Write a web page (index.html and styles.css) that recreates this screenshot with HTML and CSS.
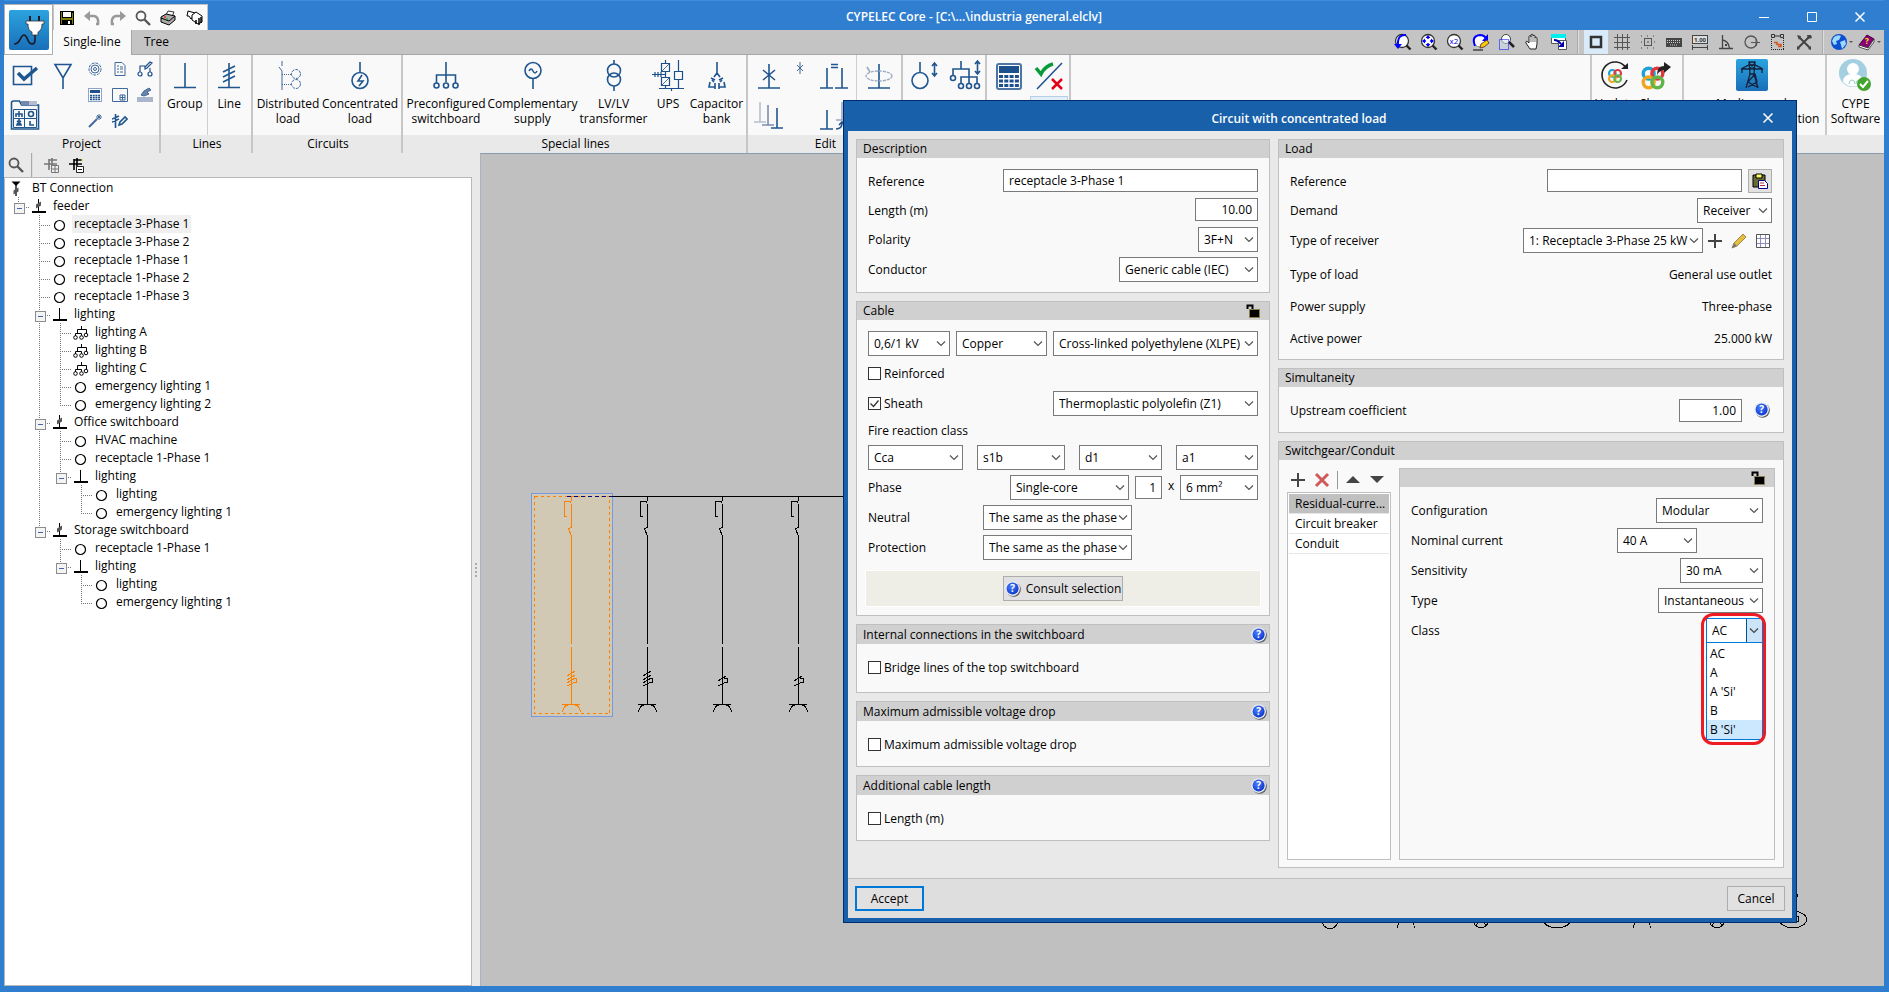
FILE: index.html
```html
<!DOCTYPE html>
<html lang="en">
<head>
<meta charset="utf-8">
<title>CYPELEC Core</title>
<link rel="stylesheet" href="styles.css">
</head>
<body>
<svg class="sprite" width="0" height="0" aria-hidden="true">
  <defs>
    <linearGradient id="sky" x1="0" y1="0" x2="0" y2="1"><stop offset="0" stop-color="#2ba3df"/><stop offset="1" stop-color="#1a6fb8"/></linearGradient>
    <radialGradient id="ball" cx=".4" cy=".35" r=".7"><stop offset="0" stop-color="#4a7dff"/><stop offset="1" stop-color="#0a35c8"/></radialGradient>
    <symbol id="help" viewBox="0 0 16 16"><circle cx="8.500" cy="8.500" r="7.300" fill="#55585f"/><circle cx="7.600" cy="7.600" r="7.400" fill="#e8ebf5"/><circle cx="7.600" cy="7.600" r="6" fill="url(#ball)"/><text x="7.600" y="11.400" text-anchor="middle" font-size="10" font-weight="700" fill="#fff">?</text></symbol>
    <symbol id="lock" viewBox="0 0 16 16"><path d="M2.500 6V2.500h5V6" fill="none" stroke="#000" stroke-width="2"/><rect x="4.500" y="6.500" width="10" height="8" fill="#000" stroke="#8a7f4a"/></symbol>
    <symbol id="plus" viewBox="0 0 16 16"><path d="M8 1v14M1 8h14" stroke="#444" stroke-width="2"/></symbol>
    <symbol id="glass" viewBox="0 0 16 16"><circle cx="6" cy="6" r="4.500" fill="none" stroke="#555" stroke-width="1.800"/><path d="M9.500 9.500l5.500 5.500" stroke="#555" stroke-width="2.400"/></symbol>
    <symbol id="lens" viewBox="0 0 18 18"><circle cx="8" cy="8" r="6.500" fill="#fff" stroke="#333" stroke-width="1.300"/><path d="M12.500 12.500l4 4" stroke="#222" stroke-width="2.400"/></symbol>
    <symbol id="t-circle" viewBox="0 0 20 18"><circle cx="9.500" cy="10.500" r="5" fill="#fff" stroke="#000" stroke-width="1.200"/></symbol>
    <symbol id="t-group" viewBox="0 0 20 18"><path d="M9.500 3v12" stroke="#000"/><path d="M3 15h14" stroke="#000" stroke-width="2"/></symbol>
    <symbol id="t-board" viewBox="0 0 20 18"><path d="M9.500 2v13" stroke="#000"/><path d="M3 15h14" stroke="#000" stroke-width="2"/><path d="M7 7.500l5-3v4l-5 3z" fill="#555"/></symbol>
    <symbol id="t-feed" viewBox="0 0 20 18"><path d="M5.500 2.500h9L10 7z"/><path d="M10 6v11" stroke="#000" stroke-width="1.300"/><path d="M7.500 11.500l5-3v4l-5 3z" fill="#555"/></symbol>
    <symbol id="t-dist" viewBox="0 0 20 18"><path d="M10.500 3v3M6.500 11V6.500h9V11M4.500 13v-2.500h6v2" fill="none" stroke="#000"/><g fill="#fff" stroke="#000"><circle cx="4.500" cy="14.500" r="1.800"/><circle cx="10.500" cy="14.500" r="1.800"/><circle cx="15" cy="12" r="1.800"/></g></symbol>
    <symbol id="rings" viewBox="0 0 24 24"><g fill="none" stroke-width="3.200"><circle cx="8" cy="8" r="5" stroke="#1ba3d8"/><circle cx="16" cy="8" r="5" stroke="#e0383e"/><circle cx="8" cy="16" r="5" stroke="#f2a51e"/><circle cx="16" cy="16" r="5" stroke="#62b549"/></g></symbol>
  </defs>
</svg>

<div class="window">
<header class="top">
  <button class="app" aria-label="Application menu"><svg width="40" height="40" viewBox="0 0 40 40"><rect width="40" height="40" rx="2" fill="url(#sky)"/><path d="M5 34c7 0 6-9 10-9s3 9 8 9c4 0 3-6 3-9" fill="none" stroke="#1b1b2b" stroke-width="1.600"/><path d="M21 6v5M30 6v5" stroke="#1b1b2b" stroke-width="2"/><path d="M17 11h18v3h-2c0 5-2 7-4 8v3h-6v-3c-3-1-4-4-4-8h-2z" fill="#fff" stroke="#333" stroke-width=".8"/></svg></button>
  <div class="top-main">
    <div class="titlebar">
      <div class="quick">
        <button aria-label="Save"><svg width="16" height="16"><path d="M1 1h14v14H1z" fill="#000"/><path d="M2 2h1v12H2zM13 3h1v11h-1z" fill="#808000"/><path d="M4 2h8v5H4z" fill="#fff"/><path d="M2 8h12v2H2z" fill="#808000"/><path d="M9 11h2v3H9z" fill="#fff"/></svg></button>
        <button aria-label="Undo"><svg width="16" height="16"><path d="M4 6h6q5 1 4 8h-2" fill="none" stroke="#999" stroke-width="2.500"/><path d="M6 1v10L0 6z" fill="#999"/></svg></button>
        <button aria-label="Redo"><svg width="16" height="16"><path d="M12 6H6Q1 7 2 14h2" fill="none" stroke="#999" stroke-width="2.500"/><path d="M10 1v10l6-5z" fill="#999"/></svg></button>
        <button aria-label="Search"><svg width="16" height="16"><use href="#glass"/></svg></button>
        <button aria-label="Print"><svg width="17" height="16"><path d="M6 5l2-4 6 1-2 5z" fill="#fff" stroke="#333"/><path d="M1 7l5-3 9 2v4l-6 5-8-3z" fill="#aaa" stroke="#000"/><path d="M1 8l8 3 6-5" fill="none" stroke="#000"/><path d="M4 7h2" stroke="#f00"/><path d="M6 9h2" stroke="#0a0"/></svg></button>
        <button aria-label="Configure print"><svg width="17" height="16"><path d="M2 1l7 2-1 2-3 4-2-3H1z" fill="#fff" stroke="#000"/><path d="M6 5l4-3 6 4v6l-4 2-6-4z" fill="#fff" stroke="#000"/><path d="M13 8v7M10 10v4M15 7v6" stroke="#000" stroke-width="1.500"/></svg></button>
      </div>
      <h1 class="title">CYPELEC Core - [C:\...\industria general.elclv]</h1>
      <div class="controls">
        <button aria-label="Minimize"><svg width="12" height="12"><path d="M1 6.500h10" stroke="#fff"/></svg></button>
        <button aria-label="Maximize"><svg width="12" height="12"><path d="M1.500 1.500h9v9h-9z" fill="none" stroke="#fff"/></svg></button>
        <button aria-label="Close"><svg width="12" height="12"><path d="M1.500 1.500l9 9m0-9l-9 9" stroke="#fff" stroke-width="1.500"/></svg></button>
      </div>
    </div>
    <div class="tabbar">
      <nav class="tabs"><a class="tab active" href="#single">Single-line</a><a class="tab" href="#tree">Tree</a></nav>
      <div class="tools">
        <button aria-label="Redraw"><svg width="18" height="18"><use href="#lens"/><path d="M12 2Q3 1 4 13" fill="none" stroke="#00f" stroke-width="2"/><path d="M0 11h8l-4 5z" fill="#00f"/></svg></button>
        <button aria-label="Zoom extents"><svg width="18" height="18"><use href="#lens"/><path d="M8 3v3M8 10v3M3 8h3M10 8h3" stroke="#00f" stroke-width="1.500"/><path d="M8 2l2.500 3h-5zM8 14l2.500-3h-5zM2 8l3-2.500v5zM14 8l-3-2.500v5z" fill="#00f"/></svg></button>
        <button aria-label="Zoom by two"><svg width="18" height="18"><use href="#lens"/><text x="8" y="11" text-anchor="middle" font-size="8" fill="#00f">x2</text></svg></button>
        <button aria-label="Previous zoom"><svg width="18" height="18"><circle cx="8" cy="8" r="6" fill="#fff" stroke="#888"/><path d="M3 13Q-1 3 8 2q4 0 7 4" fill="none" stroke="#00f" stroke-width="2"/><path d="M16 1v7H10z" fill="#00f"/><path d="M8 15l1-4 6-4 2 3-5 4z" fill="#fc0" stroke="#643"/><path d="M1 17h10" stroke="#000"/></svg></button>
        <button aria-label="Window zoom"><svg width="18" height="18"><circle cx="8" cy="6" r="4.500" fill="#fff" stroke="#444"/><path d="M11 9l5 5" stroke="#222" stroke-width="2.500"/><path d="M1.500 6.500h9v10h-9z" fill="#cde" fill-opacity=".5" stroke="#00f" stroke-dasharray="1 1"/></svg></button>
        <button aria-label="Pan"><svg width="18" height="18"><path d="M6 16L2 10c-1-2 1-2 2-1l1 1V4c0-2 2-2 2 0V2c0-1 2-1 2 0v1c0-1 2-1 2 0v2c0-1 2-1 2 0v6l-1 5z" fill="#fff" stroke="#222"/><path d="M7 4v5M9 3v6M11 5v4" stroke="#777"/></svg></button>
        <button aria-label="Next window"><svg width="18" height="18"><path d="M1.500 1.500h14v9h-14z" fill="#fff" stroke="#555"/><path d="M1 1h15v4H1z" fill="#0ee"/><path d="M8.500 7.500h8v9h-8z" fill="#fff" stroke="#555"/><path d="M4 7q4 0 7 4" fill="none" stroke="#00a" stroke-width="2"/><path d="M8 14l6-6v6z" fill="#00a"/></svg></button>
        <span class="bar-sep"></span>
        <button class="on" aria-label="Frame"><svg width="18" height="18"><rect x="4" y="4" width="10" height="10" fill="none" stroke="#333" stroke-width="2.500"/></svg></button>
        <button aria-label="Grid"><svg width="18" height="18"><path d="M4.500 1v16M9.500 1v16M14.500 1v16M1 4.500h16M1 9.500h16M1 14.500h16" stroke="#555"/></svg></button>
        <button aria-label="Snap"><svg width="18" height="18"><rect x="5.500" y="5.500" width="7" height="7" fill="none" stroke="#555"/><path d="M8 9h2M2 3h1M8 3h1M14 3h1M2 9h1M15 9h1M2 15h1M8 15h1M14 15h1" stroke="#444"/></svg></button>
        <button aria-label="Keyboard"><svg width="18" height="18"><rect x="1" y="5" width="16" height="9" fill="#444"/><path d="M2 7.500h14M2 9.500h14M5 12h8" stroke="#ccc" stroke-dasharray="1 1"/></svg></button>
        <button aria-label="Dimensions"><svg width="18" height="18"><rect x="1.500" y="2.500" width="15" height="8" fill="#ddd" stroke="#444"/><text x="9" y="9" text-anchor="middle" font-size="6" font-weight="700" fill="#333">1.00</text><path d="M1.500 12v5M16.500 12v5M2 14.500h14" stroke="#444"/></svg></button>
        <button aria-label="Orthogonal"><svg width="18" height="18"><path d="M2 15.500h14M5.500 2v13M5.500 7q6 1 7 8" fill="none" stroke="#444" stroke-width="1.300"/><path d="M8 12h2" stroke="#444" stroke-width="2"/></svg></button>
        <button aria-label="Polar"><svg width="18" height="18"><circle cx="8" cy="9" r="6" fill="none" stroke="#555" stroke-width="1.300"/><path d="M8 9.500h9M13 6v7" stroke="#555"/></svg></button>
        <button aria-label="Tracking"><svg width="18" height="18"><path d="M2.500 1.500h3v3h-3zM11.500 1.500h3v3h-3zM6 3h5" fill="none" stroke="#333"/><path d="M2.500 6v11M14.500 5v12M2 16.500h13" stroke="#222" stroke-dasharray="1 1"/><path d="M5 9.500h3v2h4v2H9" fill="none" stroke="#d4521e" stroke-width="1.500"/></svg></button>
        <button aria-label="Tools"><svg width="18" height="18"><path d="M3 15L14 4M4 4l11 11" stroke="#444" stroke-width="2"/><path d="M2 2l4 1-2 4zM16 2h-4l1 4 4-1zM2 13l3 3-3 1zM16 13l-3 3 3 1z" fill="#444"/></svg></button>
        <span class="bar-sep"></span>
        <button class="more" aria-label="Web"><svg width="18" height="18"><circle cx="9" cy="9" r="8" fill="#0a50d0"/><path d="M4 4q4-3 7-1l-2 4-3 1 1 3-3 1-2-4zM10 9l5-2 1 4-4 5-1-4z" fill="#9fd8ff"/></svg></button>
        <button class="more" aria-label="Manual"><svg width="18" height="18"><path d="M1 12l8-10 7 4-6 10z" fill="#8a0078" stroke="#400038"/><path d="M1 12l9 3 6-9v3l-6 8-9-3z" fill="#fff" stroke="#333" stroke-width=".8"/><text x="9" y="11" font-size="8" fill="#fe0" text-anchor="middle" font-weight="700">?</text></svg></button>
      </div>
    </div>
  </div>
</header>

<section class="ribbon">
  <div class="group g-project">
    <div class="project">
      <div class="stack">
        <button aria-label="General data"><svg class="ink" width="30" height="30"><path d="M3.500 6.500h18v18h-18z"/><path d="M8 13l6 6L27 8" stroke-width="3.500"/></svg></button>
        <button aria-label="Library"><svg class="ink" width="30" height="30"><path d="M1.500 29V3q0-2 2-2h6l2 4h17v24z"/><path d="M11 1h8v4h-8z" fill="#7689ac" stroke="none"/><path d="M19 1h8v4h-8z" fill="#b7bdd0" stroke="none"/><path d="M3.500 9.500h11v9h-11zM14.500 9.500h12v9h-12zM3.500 18.500h11v9h-11zM14.500 18.500h12v9h-12z" stroke-width="1"/><circle cx="21" cy="14" r="2.500"/><path d="M9 11v3M6 17v-3h6v3M9 14v3M9 19v6M6 25h6M7 21l4 3m0-3l-4 3M20 21v4h4"/></svg></button>
      </div>
      <button class="mid" aria-label="Supply"><svg class="ink" width="20" height="30"><path d="M2 3.500h16L10 17zM10 16v12"/></svg></button>
      <div class="nine">
        <button aria-label="Options"><svg class="ink thin" width="16" height="16"><circle cx="8" cy="8" r="6" stroke-dasharray="3 1"/><circle cx="8" cy="8" r="4"/><circle cx="8" cy="8" r="1.500"/></svg></button>
        <button aria-label="Report"><svg class="ink thin" width="16" height="16"><path d="M3 1.500h7l3 3v10H3zM5 5h2M8 6h3M5 8h2M8 8h3M5 11h2M8 11h3"/></svg></button>
        <button aria-label="Edit scheme"><svg class="ink thin strong" width="16" height="16"><path d="M3 11V5h5M13 11V7M8 6l5-5 2 1-5 5-2 1z"/><circle cx="3" cy="13" r="2"/><circle cx="13" cy="13" r="2"/></svg></button>
        <button aria-label="Calculator"><svg width="16" height="16"><rect x="1.500" y="1.500" width="13" height="13" fill="#fff" stroke="#8da5c4"/><path d="M3 3h10v3H3z" fill="#1c4f8c"/><path d="M3 8.500h10M3 10.500h10M3 12.500h10" stroke="#1c4f8c" stroke-width="1.500" stroke-dasharray="2 .7"/></svg></button>
        <button aria-label="Sheet"><svg class="ink thin" width="16" height="16"><path d="M.5 1.500h15v13H.5zM8 8h5v5H8zM10.500 8v5M8 10.500h5"/></svg></button>
        <button aria-label="Materials"><svg class="ink thin" width="16" height="16"><path d="M0 10h16v5H0z" fill="#a9b6cb" stroke="none"/><path d="M4 8l3-4 5-3 2 2-4 2 2 2-5 2z" fill="#6a83a8"/></svg></button>
        <button aria-label="Wizard"><svg class="ink thin" width="16" height="16"><path d="M2 14l8-8" stroke-width="2"/><path d="M12 1v6M9 4h6M10 2l4 4m0-4l-4 4"/></svg></button>
        <button aria-label="Edit line"><svg class="ink" width="16" height="16"><path d="M3.500 1v14M0 6l7-3M0 9l7-3M7 12l1-3 5-5 2 2-5 5z"/></svg></button>
      </div>
    </div>
    <div class="caption">Project</div>
  </div>
  <div class="group g-lines">
    <div class="buttons">
      <button class="big"><svg class="ink" width="30" height="34"><path d="M15 5v24M4 29.500h22"/></svg>Group</button>
      <span class="sub-sep"></span>
      <button class="big"><svg class="ink" width="30" height="34"><path d="M15 5v24M4 29.500h22M9 14l12-6M9 19l12-6M9 24l12-6"/></svg>Line</button>
    </div>
    <div class="caption">Lines</div>
  </div>
  <div class="group g-circuits">
    <div class="buttons">
      <button class="big w-dist"><svg class="ink thin" width="30" height="34"><path d="M9 3v5M6 9l3 4v19"/><path d="M9 16.500h9M9 26.500h9" stroke-dasharray="1 1"/><circle cx="23" cy="16" r="4.500" stroke-dasharray="3 1"/><circle cx="23" cy="26" r="4.500" stroke-dasharray="3 1"/></svg>Distributed<br>load</button>
      <button class="big w-conc"><svg class="ink" width="30" height="34"><path d="M15 4v10"/><circle cx="15" cy="22.500" r="8"/><path d="M17 17l-4 6h5l-4 5"/></svg>Concentrated<br>load</button>
    </div>
    <div class="caption">Circuits</div>
  </div>
  <div class="group g-special">
    <div class="buttons">
      <button class="big w-pre"><svg class="ink" width="30" height="34"><path d="M15 4v20M5.500 25v-8h19v8"/><circle cx="5.500" cy="27.500" r="2.500"/><circle cx="15" cy="27.500" r="2.500"/><circle cx="24.500" cy="27.500" r="2.500"/></svg>Preconfigured<br>switchboard</button>
      <button class="big w-comp"><svg class="ink" width="30" height="34"><circle cx="15" cy="12.500" r="8"/><path d="M15 21v10M11 13q2-4 4 0t4 0"/></svg>Complementary<br>supply</button>
      <button class="big w-lv"><svg class="ink" width="30" height="34"><path d="M15 2v4M15 28v5"/><circle cx="15" cy="12.500" r="6.500"/><circle cx="15" cy="21.500" r="6.500"/></svg>LV/LV<br>transformer</button>
      <button class="big w-ups"><svg class="ink thin strong" width="34" height="34"><path d="M14.500 2v3M14.500 13v6M14.500 27v3M27.500 2v11M27.500 22v8M8 30.500h25M20.500 30v3M1 16.500h13M4 14v5M7 14v5M10 14v5M10.500 5.500h8v8h-8zM10.500 19.500h8v8h-8zM23.500 13.500h8v8h-8z"/><path d="M11 13l7-7M11 27l7-7" stroke-width=".8"/></svg>UPS</button>
      <button class="big w-cap"><svg class="ink" width="30" height="34"><path d="M15 4v11M15 15l-3 4M15 15l3 4M9 20l4 2M21 20l-4 2M8 24l-1 5h6M22 24l1 5h-6M13 25v6M17 25v6M10 22l2 2M20 22l-2 2"/></svg>Capacitor<br>bank</button>
    </div>
    <div class="caption">Special lines</div>
  </div>
  <div class="group g-edit">
    <div class="buttons">
      <div class="edit-icons">
        <button aria-label="Delete line"><svg class="ink" width="30" height="34"><path d="M15 6v24M4 30h22M9 12l12 10M21 12L9 22"/></svg></button>
        <button aria-label="Delete point"><svg class="ink thin" width="16" height="34"><path d="M8 4v12M5 7l6 6M11 7l-6 6"/></svg></button>
        <button aria-label="Match"><svg class="ink" width="30" height="34"><path d="M8 10v20M1 30h13M23 10v20M16 30h13M12 6.500h7M12 9.500h7"/></svg></button>
        <button aria-label="Move"><svg class="ink" width="32" height="34"><path d="M7 4v20M1 24h12" stroke="#b8bfd2"/><path d="M15 7v20M9 27h12" stroke="#7c8db0"/><path d="M24 10v20M18 30h12"/></svg></button>
        <span></span>
        <button aria-label="Copy"><svg class="ink" width="30" height="34"><path d="M8 12v19M1 31h13"/><path d="M23 4v18M17 22h12" stroke="#9aa6c0"/><path d="M17 31q6 0 6-6M20 27l3-3 3 3"/></svg></button>
      </div>
      <span class="sub-sep"></span>
      <button class="big w-loop" aria-label="Rotate"><svg class="ink" width="30" height="34"><path d="M15 6v24M4 30h22"/><ellipse cx="15" cy="18" rx="13" ry="5" stroke="#9aa9c2" stroke-width="1.300" stroke-dasharray="3 1"/><path d="M3 9l3 5" stroke="#9aa9c2"/></svg></button>
    </div>
    <div class="caption">Edit</div>
  </div>
  <div class="group g-pair">
    <div class="buttons">
      <button class="big w-pair" aria-label="Move load"><svg class="ink" width="30" height="34"><path d="M10 4v10"/><circle cx="10" cy="22.500" r="8"/><path d="M24.500 6v11M22 8l2.500-3L27 8M22 15l2.500 3 2.500-3"/></svg></button>
      <button class="big w-pair" aria-label="Move tree"><svg class="ink" width="32" height="34"><path d="M12 3v8M4 17v-6h16v6M12 26v-7h16v7M20 17v9M28.500 4v11M26 6l2.500-3L31 6M26 13l2.500 3 2.500-3"/><circle cx="4" cy="20" r="2.500"/><circle cx="12" cy="28" r="2.500"/><circle cx="20" cy="28" r="2.500"/><circle cx="28" cy="28" r="2.500"/></svg></button>
    </div>
  </div>
  <div class="group g-pair">
    <div class="buttons">
      <button class="big w-pair" aria-label="Calculate"><svg width="28" height="34"><rect x="2" y="6" width="24" height="25" rx="2" fill="#fff" stroke="#4c74a5" stroke-width="2"/><path d="M4 8h20v7H4z" fill="#1c4f8c"/><path d="M4 18.500h20M4 23h20M4 27.500h20" stroke="#1c4f8c" stroke-width="3" stroke-dasharray="4 1.300"/></svg></button>
      <button class="big w-pair check-btn" aria-label="Check"><svg width="30" height="34"><path d="M3 31L28 5" stroke="#1c4f8c" stroke-width="1.500"/><path d="M2 10l5 6Q11 8 19 6" fill="none" stroke="#0a9a3a" stroke-width="3.500"/><path d="M18 21l10 10m0-10L18 31" stroke="#e2001a" stroke-width="2.500"/></svg><span class="under"></span></button>
    </div>
  </div>
  <div class="ribbon-right">
    <div class="rgroup r-up">
      <button class="big w-half"><svg width="30" height="34"><path d="M26 10A13 13 0 1 0 27 22" fill="none" stroke="#222" stroke-width="1.600"/><path d="M21 11h7V5z" fill="#222"/><svg x="7" y="10" width="16" height="16"><use href="#rings"/></svg></svg>Update</button>
      <button class="big w-half"><svg width="34" height="34"><svg x="1" y="7" width="26" height="26"><use href="#rings"/></svg><path d="M18 17q0-9 7-9V4l7 5-7 6v-3q-4 0-7 5z" fill="#222"/></svg>Share</button>
    </div>
    <div class="rgroup r-mv">
      <button class="big"><svg width="32" height="34"><rect y="1" width="32" height="32" rx="2" fill="url(#sky)"/><path d="M10 30l4-14-1-12h6l-1 12 4 14M5 11l8-4h6l8 4M5 11h22M6 11v4M26 11v4M13 16h6l2 8-9 5M19 16l-7 8 9 5M13 5l6 6M19 5l-6 6" fill="none" stroke="#14213a" stroke-width="1.300"/></svg>Medium and<br>high voltage distribution</button>
    </div>
    <div class="rgroup r-cype">
      <button class="big"><svg width="32" height="34"><circle cx="14" cy="15" r="14" fill="#a3cfe0"/><circle cx="14" cy="11" r="6" fill="#fff"/><path d="M4 24q0-8 10-8t10 8q-10 9-20 0z" fill="#fff"/><path d="M10 26q0-4 3-4t3 4M17 26q0-4 3-4" fill="none" stroke="#9cc"/><circle cx="25" cy="26" r="7" fill="#43a52f"/><path d="M21 26l3 3 5-6" fill="none" stroke="#fff" stroke-width="2"/></svg>CYPE<br>Software</button>
    </div>
  </div>
</section>

<main class="work">
  <aside class="side">
    <div class="side-tools">
      <button aria-label="Find"><svg width="16" height="16"><use href="#glass"/></svg></button>
      <span class="bar-sep"></span>
      <button aria-label="Expand all"><svg width="16" height="16"><path d="M1 7h5M6 2v11M6 3h8M6 7h8M9 1v4M9 5v8" stroke="#777" stroke-width="1.600" fill="none"/><path d="M8.500 8.500h7v7h-7zM12 8v8M8 12h8" fill="#eee" stroke="#777"/></svg></button>
      <button aria-label="Collapse all"><svg width="16" height="16"><path d="M1 7h5M6 2v11M6 3h8M6 7h8M9 1v4M9 5v8" stroke="#000" stroke-width="1.600" fill="none"/><path d="M13 3h2" stroke="#dd0"/><path d="M8.500 9.500h7v6h-7zM10 12.500h4" fill="#fff" stroke="#222"/></svg></button>
    </div>
    <div class="tree">
      <div class="row root"><svg width="20" height="18"><use href="#t-feed"/></svg><span>BT Connection</span></div>
      <ul>
        <li><div class="row"><i class="exp"></i><svg width="20" height="18"><use href="#t-board"/></svg><span>feeder</span></div>
          <ul>
            <li><div class="row"><i></i><svg width="20" height="18"><use href="#t-circle"/></svg><span class="sel">receptacle 3-Phase 1</span></div></li>
            <li><div class="row"><i></i><svg width="20" height="18"><use href="#t-circle"/></svg><span>receptacle 3-Phase 2</span></div></li>
            <li><div class="row"><i></i><svg width="20" height="18"><use href="#t-circle"/></svg><span>receptacle 1-Phase 1</span></div></li>
            <li><div class="row"><i></i><svg width="20" height="18"><use href="#t-circle"/></svg><span>receptacle 1-Phase 2</span></div></li>
            <li><div class="row"><i></i><svg width="20" height="18"><use href="#t-circle"/></svg><span>receptacle 1-Phase 3</span></div></li>
            <li><div class="row"><i class="exp"></i><svg width="20" height="18"><use href="#t-group"/></svg><span>lighting</span></div>
              <ul>
                <li><div class="row"><i></i><svg width="20" height="18"><use href="#t-dist"/></svg><span>lighting A</span></div></li>
                <li><div class="row"><i></i><svg width="20" height="18"><use href="#t-dist"/></svg><span>lighting B</span></div></li>
                <li><div class="row"><i></i><svg width="20" height="18"><use href="#t-dist"/></svg><span>lighting C</span></div></li>
                <li><div class="row"><i></i><svg width="20" height="18"><use href="#t-circle"/></svg><span>emergency lighting 1</span></div></li>
                <li><div class="row"><i></i><svg width="20" height="18"><use href="#t-circle"/></svg><span>emergency lighting 2</span></div></li>
              </ul></li>
            <li><div class="row"><i class="exp"></i><svg width="20" height="18"><use href="#t-board"/></svg><span>Office switchboard</span></div>
              <ul>
                <li><div class="row"><i></i><svg width="20" height="18"><use href="#t-circle"/></svg><span>HVAC machine</span></div></li>
                <li><div class="row"><i></i><svg width="20" height="18"><use href="#t-circle"/></svg><span>receptacle 1-Phase 1</span></div></li>
                <li><div class="row"><i class="exp"></i><svg width="20" height="18"><use href="#t-group"/></svg><span>lighting</span></div>
                  <ul>
                    <li><div class="row"><i></i><svg width="20" height="18"><use href="#t-circle"/></svg><span>lighting</span></div></li>
                    <li><div class="row"><i></i><svg width="20" height="18"><use href="#t-circle"/></svg><span>emergency lighting 1</span></div></li>
                  </ul></li>
              </ul></li>
            <li><div class="row"><i class="exp"></i><svg width="20" height="18"><use href="#t-board"/></svg><span>Storage switchboard</span></div>
              <ul>
                <li><div class="row"><i></i><svg width="20" height="18"><use href="#t-circle"/></svg><span>receptacle 1-Phase 1</span></div></li>
                <li><div class="row"><i class="exp"></i><svg width="20" height="18"><use href="#t-group"/></svg><span>lighting</span></div>
                  <ul>
                    <li><div class="row"><i></i><svg width="20" height="18"><use href="#t-circle"/></svg><span>lighting</span></div></li>
                    <li><div class="row"><i></i><svg width="20" height="18"><use href="#t-circle"/></svg><span>emergency lighting 1</span></div></li>
                  </ul></li>
              </ul></li>
          </ul></li>
      </ul>
    </div>
  </aside>
  <div class="splitter"><i></i><i></i><i></i><i></i></div>
  <div class="canvas">
    <svg width="100%" height="100%" fill="none" stroke="#000" shape-rendering="crispEdges">
      <defs>
        <g id="feed"><path d="M0 1v2l-1 4M-1 5.500h-6.500v15h3M0 8v23l-3 2 3 7v108M0 151v57M-9.500 208.500h18M-9 216q1-6 5-7M9 216q-1-6-5-7"/></g>
        <path id="s4" d="M-4.500 180l8-5M-4.500 184l8-5M-4.500 187l8-5M-4.500 190l8-4h1v-4h-3"/>
        <path id="s2" d="M-4.500 185l8-5M-4.500 190l8-4h1v-4h-3"/>
      </defs>
      <g transform="translate(-481 -154)">
        <path d="M531.500 493.500h81v223h-81z" fill="#d2c9b5" stroke="#7a98e0"/>
        <path d="M613 496.500h240"/>
        <path d="M534.500 496.500h75v217h-75z" stroke="#ff8000" stroke-dasharray="3 3"/>
        <path d="M567 496.500h46" stroke="#000080" stroke-dasharray="4 3"/>
        <g transform="translate(571.500 496)" stroke="#ff8000"><use href="#feed"/><use href="#s4"/></g>
        <g transform="translate(647.500 496)"><use href="#feed"/><use href="#s4"/></g>
        <g transform="translate(722.500 496)"><use href="#feed"/><use href="#s2"/></g>
        <g transform="translate(798.500 496)"><use href="#feed"/><use href="#s2"/></g>
        <circle cx="1330" cy="920.500" r="8"/>
        <path d="M1397.500 928q1-10 8-12M1414.500 928q-1-10-8-12"/>
        <circle cx="1481" cy="919.500" r="8"/><path d="M1475 926l12-12M1487 926l-12-12"/>
        <ellipse cx="1557" cy="919" rx="14" ry="9"/>
        <path d="M1633.500 928q1-10 8-12M1650.500 928q-1-10-8-12"/>
        <circle cx="1717" cy="919.500" r="8"/><path d="M1711 926l12-12M1723 926l-12-12"/>
        <ellipse cx="1793" cy="919.500" rx="13.500" ry="8.500"/><circle cx="1796" cy="919" r="3"/><path d="M1797.500 894v3"/>
      </g>
    </svg>
  </div>
</main>

<form class="dialog" role="dialog" aria-labelledby="dlg-title">
  <div class="dlg-title"><h2 id="dlg-title">Circuit with concentrated load</h2><button type="button" class="dlg-close" aria-label="Close dialog"><svg width="12" height="12"><path d="M1.500 1.500l9 9m0-9l-9 9" stroke="#fff" stroke-width="1.500"/></svg></button></div>
  <div class="dlg-body">
    <div class="col col-left">
      <section class="panel">
        <h3>Description</h3>
        <div class="fields">
          <div class="field"><label for="ref">Reference</label><input class="w255" id="ref" value="receptacle 3-Phase 1"></div>
          <div class="field"><label for="len">Length (m)</label><input class="w63 num" id="len" value="10.00"></div>
          <div class="field tall"><label for="pol">Polarity</label><select class="w60" id="pol"><option>3F+N</option></select></div>
          <div class="field tall"><label for="con">Conductor</label><select class="w139" id="con"><option>Generic cable (IEC)</option></select></div>
        </div>
      </section>
      <section class="panel">
        <h3>Cable<svg class="h-lock" width="16" height="16"><use href="#lock"/></svg></h3>
        <div class="fields">
          <div class="field tall"><select class="w82" aria-label="Voltage"><option>0,6/1 kV</option></select><select class="w91" aria-label="Metal"><option>Copper</option></select><select class="w205" aria-label="Insulation"><option>Cross-linked polyethylene (XLPE)</option></select></div>
          <div class="field tall"><label class="check"><input type="checkbox">Reinforced</label></div>
          <div class="field tall"><label class="check"><input type="checkbox" checked>Sheath</label><select class="w205" aria-label="Sheath material"><option>Thermoplastic polyolefin (Z1)</option></select></div>
          <div class="field short"><span>Fire reaction class</span></div>
          <div class="field tall"><select class="w95" aria-label="Fire class"><option>Cca</option></select><select class="w88" aria-label="Smoke"><option>s1b</option></select><select class="w83" aria-label="Droplets"><option>d1</option></select><select class="w82" aria-label="Acidity"><option>a1</option></select></div>
          <div class="field tall"><label for="ph">Phase</label><div class="inline"><select class="w119" id="ph"><option>Single-core</option></select><input class="w27 num" aria-label="Number of conductors" value="1"><span class="times">x</span><select class="w78" aria-label="Section"><option>6 mm²</option></select></div></div>
          <div class="field tall half"><label for="ne">Neutral</label><select class="w149" id="ne"><option>The same as the phase</option></select></div>
          <div class="field tall half"><label for="pr">Protection</label><select class="w149" id="pr"><option>The same as the phase</option></select></div>
        </div>
        <div class="consult"><button type="button" class="btn"><svg width="16" height="16"><use href="#help"/></svg>Consult selection</button></div>
      </section>
      <section class="panel">
        <h3 class="with-help">Internal connections in the switchboard<svg width="16" height="16"><use href="#help"/></svg></h3>
        <div class="fields roomy"><div class="field"><label class="check"><input type="checkbox">Bridge lines of the top switchboard</label></div></div>
      </section>
      <section class="panel">
        <h3 class="with-help">Maximum admissible voltage drop<svg width="16" height="16"><use href="#help"/></svg></h3>
        <div class="fields"><div class="field"><label class="check"><input type="checkbox">Maximum admissible voltage drop</label></div></div>
      </section>
      <section class="panel">
        <h3 class="with-help">Additional cable length<svg width="16" height="16"><use href="#help"/></svg></h3>
        <div class="fields"><div class="field"><label class="check"><input type="checkbox">Length (m)</label></div></div>
      </section>
    </div>
    <div class="col col-right">
      <section class="panel">
        <h3>Load</h3>
        <div class="fields load">
          <div class="field"><label for="lref">Reference</label><div class="inline top-line"><input class="w195" id="lref"><button type="button" class="btn paste" aria-label="Paste"><svg width="16" height="16"><path d="M1 2h12v12H1z" fill="#6b6b35" stroke="#000"/><path d="M4 1h6v4H4z" fill="#ff6" stroke="#000"/><path d="M6.500 7.500h6l3 3v5h-9z" fill="#fff" stroke="#00008b"/><path d="M8 10h4M8 12.500h5" stroke="#a33"/></svg></button></div></div>
          <div class="field tall"><label for="dem">Demand</label><select class="w75" id="dem"><option>Receiver</option></select></div>
          <div class="field tall"><label for="rec">Type of receiver</label><div class="inline rec"><select class="w180" id="rec"><option>1: Receptacle 3-Phase 25 kW</option></select>
            <button type="button" aria-label="Add"><svg width="16" height="16"><use href="#plus"/></svg></button>
            <button type="button" aria-label="Edit"><svg width="16" height="16"><path d="M1 15l2-5L12 1l3 3-9 9z" fill="#e8bd3d" stroke="#a08a50"/><path d="M1 15l2-5 3 3z" fill="#777"/></svg></button>
            <button type="button" aria-label="Table"><svg width="16" height="16"><path d="M1 1h14v14H1z" fill="#fff"/><path d="M5.500 1v14M10.500 1v14M1 5.500h14M1 10.500h14" stroke="#8c8cc0"/><path d="M1.500 1.500h13v13h-13z" fill="none" stroke="#555"/></svg></button></div></div>
          <dl class="facts"><dt>Type of load</dt><dd>General use outlet</dd><dt>Power supply</dt><dd>Three-phase</dd><dt>Active power</dt><dd>25.000 kW</dd></dl>
        </div>
      </section>
      <section class="panel">
        <h3>Simultaneity</h3>
        <div class="fields"><div class="field"><label for="up">Upstream coefficient</label><div class="inline top-line sim"><input class="w63 num" id="up" value="1.00"><svg width="16" height="16"><use href="#help"/></svg></div></div></div>
      </section>
      <section class="panel">
        <h3>Switchgear/Conduit</h3>
        <div class="gear">
          <div class="gear-list">
            <div class="gear-tools">
              <button type="button" aria-label="Add item"><svg width="16" height="16"><use href="#plus"/></svg></button>
              <button type="button" aria-label="Delete item"><svg width="16" height="16"><path d="M2 2l12 12M14 2L2 14" stroke="#d05a5a" stroke-width="3"/></svg></button>
              <span class="v"></span>
              <button type="button" aria-label="Move up"><svg width="16" height="16"><path d="M1 11h14L8 4z" fill="#444"/></svg></button>
              <button type="button" aria-label="Move down"><svg width="16" height="16"><path d="M1 4h14l-7 7z" fill="#444"/></svg></button>
            </div>
            <ul class="items"><li class="chosen">Residual-curre...</li><li>Circuit breaker</li><li>Conduit</li></ul>
          </div>
          <div class="panel inner">
            <h3><svg class="h-lock" width="16" height="16"><use href="#lock"/></svg></h3>
            <div class="fields">
              <div class="field tall"><label for="cfg">Configuration</label><select class="w107" id="cfg"><option>Modular</option></select></div>
              <div class="field tall nominal"><label for="nom">Nominal current</label><select class="w80" id="nom"><option>40 A</option></select></div>
              <div class="field tall"><label for="sen">Sensitivity</label><select class="w83" id="sen"><option>30 mA</option></select></div>
              <div class="field tall"><label for="typ">Type</label><select class="w105" id="typ"><option>Instantaneous</option></select></div>
              <div class="field tall"><label for="cls">Class</label><div class="combo"><select class="w57 open" id="cls"><option>AC</option></select>
                <ul class="menu"><li>AC</li><li>A</li><li>A 'Si'</li><li>B</li><li class="hot">B 'Si'</li></ul><span class="mark"></span></div></div>
            </div>
          </div>
        </div>
      </section>
    </div>
  </div>
  <div class="dlg-foot"><button type="button" class="btn accept">Accept</button><button type="button" class="btn cancel">Cancel</button></div>
</form>
</div>
</body>
</html>
```
FILE: styles.css
```css
* { box-sizing: border-box; }
body { margin: 0; font: 12px/15px "Open Sans", "Noto Sans", sans-serif; color: #000; }
button { border: 0; padding: 0; margin: 0; background: none; font: inherit; color: inherit; display: flex; align-items: center; justify-content: center; }
svg { display: block; flex: none; }
ul, dl, dd { margin: 0; padding: 0; list-style: none; }
h1, h2, h3 { margin: 0; font-size: 12px; font-weight: 400; }
.sprite { position: absolute; }

.window { position: relative; min-height: 100vh; display: flex; flex-direction: column; background: #2f7ecf; border: solid #2f7ecf; border-width: 0 5px 6px 4px; }

/* title and tabs */
.top { display: flex; background: linear-gradient(#3d8ee0 1px, #2f7ecf 1px 30px, #c4c4c4 30px); }
.app { width: 49px; margin-top: 4px; height: 51px; background: #fff; border: 1px solid #b0b0b0; }
.top-main { flex: 1; }
.titlebar { display: grid; grid-template-columns: auto 1fr auto; height: 30px; padding-top: 4px; }
.quick { display: flex; background: #fafafa; border: 1px solid #c4c4c4; border-bottom: 0; width: 155px; }
.quick button { width: 26px; }
.title { color: #fff; font-weight: 600; text-align: center; line-height: 26px; }
.controls { display: flex; }
.controls button { width: 48px; }
.tabbar { display: flex; justify-content: space-between; height: 25px; border-bottom: 1px solid #a6a6a6; }
.tabs { display: flex; }
.tab { color: #000; text-decoration: none; padding: 0 12px; line-height: 24px; height: 25px; }
.tab.active { background: #f9f9f9; border-right: 1px solid #a6a6a6; width: 79px; padding: 0; text-align: center; }
.tools { display: flex; align-items: center; }
.tools button { width: 26px; height: 24px; }
.tools .on { background: #d9ebf9; width: 24px; margin: 0 1px; }
.tools .more { width: 28px; padding-right: 7px; position: relative; }
.tools .more::after { content: ""; position: absolute; right: 3px; top: 11px; border: 2px solid transparent; border-top-color: #555; }
.bar-sep { width: 2px; height: 24px; background: #aaa; border-right: 1px solid #ddd; margin: 0 4px 0 5px; }

/* ribbon */
.ribbon { display: flex; height: 98px; background: linear-gradient(#f9f9f9 80px, #e9e9e9 80px); }
.group { flex: none; border-right: 2px solid #c6c6c6; margin-right: 2px; }
.g-project { width: 157px; }
.g-lines { width: 90px; }
.g-circuits { width: 148px; }
.g-special { width: 343px; }
.g-edit { width: 153px; }
.g-pair { width: 82px; }
.buttons { display: flex; height: 80px; justify-content: center; }
.g-circuits .buttons, .g-special .buttons { justify-content: flex-start; }
.caption { text-align: center; line-height: 18px; }
.big { flex-direction: column; justify-content: flex-start; padding-top: 3px; width: 43px; text-align: center; white-space: nowrap; }
.big svg { margin-bottom: 4px; }
.g-lines .big { width: 44px; }
.w-dist.w-dist { width: 66px; } .w-conc.w-conc { width: 78px; }
.w-pre { width: 82px; } .w-comp { width: 91px; } .w-lv { width: 71px; } .w-ups { width: 38px; } .w-cap { width: 59px; }
.w-loop { width: 45px; }
.w-pair { width: 40px; }
.check-btn { position: relative; }
.under { position: absolute; left: 1px; right: 1px; top: 41px; height: 30px; border: 1px solid #b5cfe4; background: #e3f0fa; }
.sub-sep { width: 1px; background: #cfcfcf; }
.edit-icons { display: grid; grid-template-columns: 38px 24px 1fr; grid-template-rows: 40px 40px; width: 108px; align-items: center; }
.ink { fill: none; stroke: #1f568f; stroke-width: 1.6; }
.ink.thin { stroke-width: 1; stroke: #40699c; }
.ink.thin.strong { stroke: #1c4f8c; stroke-width: 1.2; }
.project { display: flex; height: 80px; }
.stack { display: grid; grid-template-rows: 1fr 1fr; width: 42px; }
.mid { width: 35px; height: 42px; }
.nine { display: grid; grid-template: repeat(3, 26px) / repeat(3, 25px); padding: 1px 2px; }
.ribbon-right { display: flex; margin-left: auto; height: 80px; }
.rgroup { display: flex; justify-content: center; border-left: 2px solid #c9c9c9; }
.rgroup .big { width: auto; }
.r-up { width: 92px; padding-right: 3px; }
.rgroup .w-half { width: 41px; }
.r-mv { width: 143px; padding-right: 6px; }
.r-cype { width: 59px; }

/* work area */
.work { flex: 1; display: flex; background: #e9e9e9; }
.side { width: 468px; display: flex; flex-direction: column; }
.side-tools { display: flex; align-items: center; height: 24px; padding-left: 3px; }
.side-tools button { width: 17px; margin-right: 8px; }
.side-tools .bar-sep { margin: 0 9px 0 0; }
.side-tools button:first-child { margin-right: 7px; }
.tree { flex: 1; background: #fff; border: 1px solid #b8b8b8; padding-top: 1px; }
.tree > ul { padding-left: 3px; }
.tree ul ul { padding-left: 21px; }
.tree li { position: relative; }
.tree li::before { content: ""; position: absolute; left: 10px; top: 0; bottom: 0; width: 1px; background: repeating-linear-gradient(#777 0 1px, transparent 1px 2px); }
.tree li:last-child::before { bottom: auto; height: 10px; }
.row { display: flex; height: 18px; align-items: center; }
.row i { width: 21px; height: 18px; position: relative; background: repeating-linear-gradient(90deg, #777 0 1px, transparent 1px 2px) 10px 10px / 11px 1px no-repeat; }
.row .exp::after { content: ""; position: absolute; left: 6px; top: 6px; width: 9px; height: 9px; border: 1px solid #8c8c8c; background: linear-gradient(#4a62a8, #4a62a8) center / 5px 1px no-repeat #f4f4f4; }
.row span { margin-left: 2px; padding: 0 2px; line-height: 18px; }
.row .sel { background: #f0f0f0; }
.root { padding-left: 1px; }
.root span { margin-left: 4px; }
.splitter { width: 8px; display: flex; flex-direction: column; justify-content: center; align-items: center; gap: 2px; }
.splitter i { width: 2px; height: 2px; background: #aaa; }
.canvas { flex: 1; position: relative; background: #c0c0c0; border-top: 1px solid #8a9db0; border-left: 1px solid #a9b4c0; overflow: hidden; }
.canvas svg { position: absolute; inset: 0; }

/* dialog */
.dialog { position: absolute; left: 839px; top: 100px; width: 954px; background: #e9e9e9; border: solid #1860aa; border-width: 0 5px 5px; outline: 1px solid #002c6f; outline-offset: -1px; }
.dlg-title { position: relative; background: #1860aa; height: 31px; padding-top: 4px; display: flex; align-items: center; justify-content: center; border-top: 1px solid #002c6f; }
.dlg-title h2 { color: #fff; font-weight: 600; margin-right: 42px; }
.dlg-close { position: absolute; right: 5px; top: 0; width: 38px; height: 34px; }
.dlg-body { display: flex; gap: 8px; padding: 8px 8px 10px; }
.col { display: flex; flex-direction: column; gap: 8px; min-width: 0; }
.col-left { flex: 414; }
.col-right { flex: 506; }
.panel { border: 1px solid #bfbfbf; background: #f9f9f9; }
.panel h3 { position: relative; background: #d0d0d0; height: 18px; line-height: 18px; padding: 0 6px; display: flex; justify-content: space-between; align-items: center; }
.panel .with-help { height: 19px; padding-right: 2px; }
.h-lock { margin: 0 2px 0 auto; }
.fields { display: flex; flex-direction: column; gap: 5px; padding: 11px 11px 10px; }
.fields.roomy { padding-bottom: 13px; }
.fields.load { padding-bottom: 4px; }
.field { display: flex; justify-content: space-between; align-items: center; height: 24px; }
.field > input { align-self: flex-start; }
.field.tall { height: 25px; }
.field.short { height: 19px; }
.half { padding-right: 126px; }
.nominal { padding-right: 66px; }
.inline { display: flex; align-items: center; gap: 6px; }
.top-line { align-items: flex-start; }
.top-line > svg { align-self: center; }
.times { padding: 0 1px 4px 0; width: 6px; }
.check { display: flex; align-items: center; gap: 3px; }
input, select { font: inherit; color: inherit; border: 1px solid #7a7a7a; background: #fff; height: 23px; padding: 0 5px; margin: 0; border-radius: 0; flex: none; }
select { appearance: none; height: 25px; padding-right: 2px; background: url("data:image/svg+xml,%3Csvg xmlns='http://www.w3.org/2000/svg' width='10' height='6'%3E%3Cpath d='M1 .5l4 4 4-4' fill='none' stroke='%23555' stroke-width='1.2'/%3E%3C/svg%3E") right 3px center no-repeat #fff; }
input[type="checkbox"] { appearance: none; width: 13px; height: 13px; padding: 0; border-color: #333; }
input[type="checkbox"]:checked { background: url("data:image/svg+xml,%3Csvg xmlns='http://www.w3.org/2000/svg' width='11' height='11'%3E%3Cpath d='M1.500 5.500l3 3 5-6' fill='none' stroke='%23333' stroke-width='1.300'/%3E%3C/svg%3E") center no-repeat #fff; }
.num { text-align: right; }
.w27 { width: 27px; } .w57 { width: 57px; } .w60 { width: 60px; } .w63 { width: 63px; } .w75 { width: 75px; } .w78 { width: 78px; }
.w80 { width: 80px; } .w82 { width: 82px; } .w83 { width: 83px; } .w88 { width: 88px; } .w91 { width: 91px; } .w95 { width: 95px; }
.w105 { width: 105px; } .w107 { width: 107px; } .w119 { width: 119px; } .w139 { width: 139px; } .w149 { width: 149px; }
.w180 { width: 180px; } .w195 { width: 195px; } .w205 { width: 205px; } .w255 { width: 255px; }
.btn { background: #e1e1e1; border: 1px solid #adadad; height: 25px; gap: 5px; }
.consult { margin: 0 8px 8px; height: 37px; background: #efeee6; border: 1px solid #fff; display: flex; justify-content: center; align-items: center; }
.consult .btn { width: 120px; white-space: nowrap; }
.paste { width: 24px; height: 24px; }
.rec { gap: 8px; padding-right: 1px; }
.rec .w180 { margin-right: -4px; }
.sim { gap: 12px; padding-right: 2px; }
.facts { display: grid; grid-template-columns: 1fr auto; line-height: 32px; padding-top: 1px; }
.facts dd { text-align: right; }
.gear { display: grid; grid-template-columns: 104px 1fr; gap: 8px; padding: 8px 8px 7px; min-height: 407px; }
.gear-list { display: flex; flex-direction: column; }
.gear-tools { display: flex; align-items: center; height: 24px; gap: 8px; padding: 0 3px; }
.gear-tools .v { width: 1px; height: 18px; background: #999; margin: 0 -1px; }
.items { flex: 1; background: #fff; border: 1px solid #bfbfbf; padding: 1px; }
.items li { line-height: 19px; padding-left: 6px; border-bottom: 1px solid #e6e6e6; white-space: nowrap; }
.items .chosen { background: #c0c0c0; }
.combo { position: relative; }
.open { border-color: #0078d7; background-color: #fff; background-image: url("data:image/svg+xml,%3Csvg xmlns='http://www.w3.org/2000/svg' width='17' height='25'%3E%3Cpath d='M.5 .5h16v24H.5z' fill='%23cce4f7' stroke='%23005499'/%3E%3Cpath d='M4 10.500l4 4 4-4' fill='none' stroke='%23444' stroke-width='1.200'/%3E%3C/svg%3E"); background-origin: border-box; background-position: right center; display: block; }
.menu { position: absolute; left: 0; right: 0; top: 24px; border: 1px solid #0078d7; background: #fff; padding-top: 1px; }
.menu li { line-height: 19px; padding-left: 3px; }
.menu .hot { background: #cce8ff; }
.mark { position: absolute; left: -5px; right: -3px; top: -5px; height: 132px; border: 3px solid #ed1c24; border-radius: 12px; }
.dlg-foot { display: flex; justify-content: space-between; align-items: center; padding: 7px; background: #dedede; border-top: 1px solid #bfbfbf; }
.dlg-foot .accept { width: 69px; border: 2px solid #0078d7; }
.dlg-foot .cancel { width: 58px; }
```
